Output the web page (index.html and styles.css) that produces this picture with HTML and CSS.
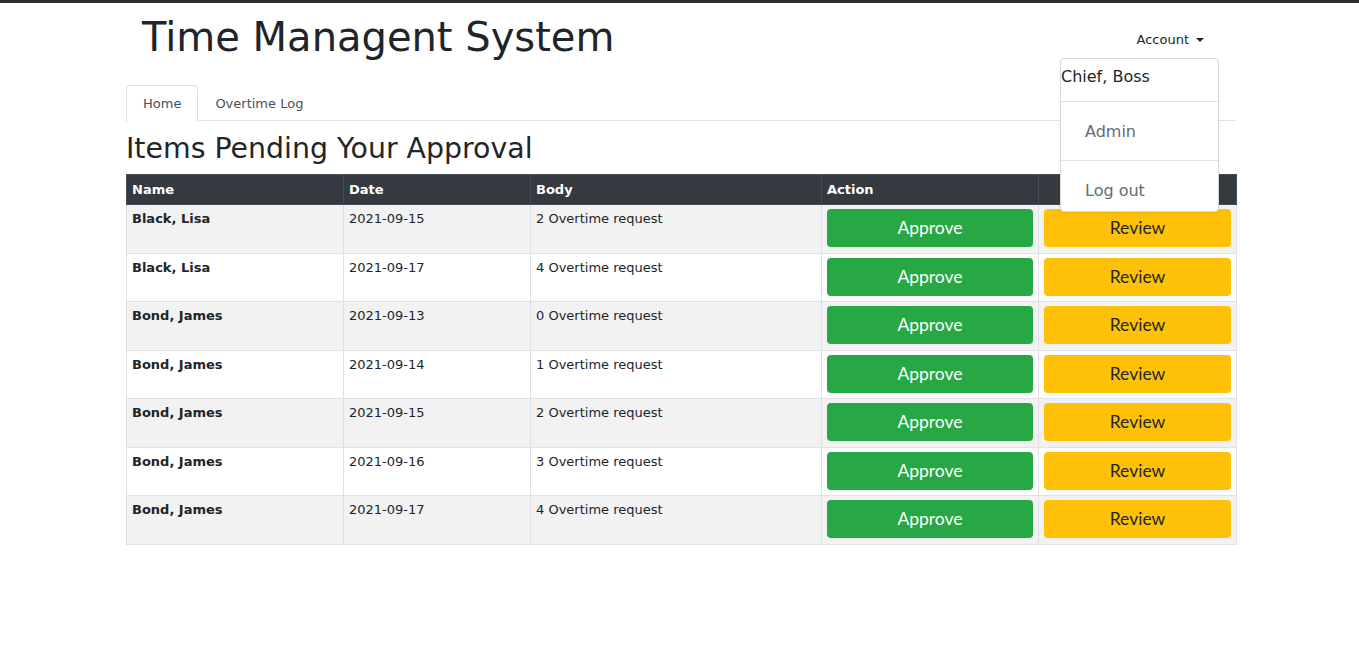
FILE: index.html
```html
<!DOCTYPE html>
<html lang="en">
<head>
<meta charset="utf-8">
<title>Time Managent System</title>
<link rel="stylesheet" href="styles.css">
</head>
<body>
<div class="page">
  <header class="top">
    <h1 class="title">Time Managent System</h1>
    <div class="account">Account <span class="caret"></span></div>
  </header>
  <nav class="tabs">
    <a class="tab active">Home</a>
    <a class="tab">Overtime Log</a>
  </nav>
  <h2 class="heading">Items Pending Your Approval</h2>
  <table class="grid">
    <colgroup>
      <col class="c1"><col class="c2"><col class="c3"><col class="c4"><col class="c5">
    </colgroup>
    <thead>
      <tr><th>Name</th><th>Date</th><th>Body</th><th>Action</th><th></th></tr>
    </thead>
    <tbody>
      <tr><td class="name">Black, Lisa</td><td>2021-09-15</td><td>2 Overtime request</td><td><button class="btn approve">Approve</button></td><td><button class="btn review">Review</button></td></tr>
      <tr><td class="name">Black, Lisa</td><td>2021-09-17</td><td>4 Overtime request</td><td><button class="btn approve">Approve</button></td><td><button class="btn review">Review</button></td></tr>
      <tr><td class="name">Bond, James</td><td>2021-09-13</td><td>0 Overtime request</td><td><button class="btn approve">Approve</button></td><td><button class="btn review">Review</button></td></tr>
      <tr><td class="name">Bond, James</td><td>2021-09-14</td><td>1 Overtime request</td><td><button class="btn approve">Approve</button></td><td><button class="btn review">Review</button></td></tr>
      <tr><td class="name">Bond, James</td><td>2021-09-15</td><td>2 Overtime request</td><td><button class="btn approve">Approve</button></td><td><button class="btn review">Review</button></td></tr>
      <tr><td class="name">Bond, James</td><td>2021-09-16</td><td>3 Overtime request</td><td><button class="btn approve">Approve</button></td><td><button class="btn review">Review</button></td></tr>
      <tr><td class="name">Bond, James</td><td>2021-09-17</td><td>4 Overtime request</td><td><button class="btn approve">Approve</button></td><td><button class="btn review">Review</button></td></tr>
    </tbody>
  </table>
</div>
<div class="menu">
  <div class="menu-user">Chief, Boss</div>
  <div class="menu-item admin">Admin</div>
  <div class="menu-item logout">Log out</div>
</div>
</body>
</html>
```
FILE: styles.css
```css
html, body {
  margin: 0;
  padding: 0;
}
body {
  border-top: 3px solid #2e2e2e;
  font-family: "DejaVu Sans", Verdana, sans-serif;
  font-size: 13px;
  color: #212529;
  background: #fff;
}
.page {
  width: 1110px;
  margin-left: 126px;
}
.top {
  display: flex;
  justify-content: space-between;
  align-items: flex-start;
}
.title {
  margin: 10px 0 0 16px;
  font-size: 40px;
  font-weight: normal;
  line-height: 48px;
  color: #212529;
}
.account {
  margin: 27px 32px 0 0;
  font-size: 13px;
  line-height: 19px;
  display: flex;
  align-items: center;
}
.caret {
  display: inline-block;
  width: 0;
  height: 0;
  margin-left: 7px;
  border-top: 4px solid #212529;
  border-left: 4px solid transparent;
  border-right: 4px solid transparent;
}
.tabs {
  display: flex;
  margin-top: 24px;
  border-bottom: 1px solid #dee2e6;
  height: 35px;
}
.tab {
  display: block;
  padding: 0 16px;
  line-height: 35px;
  font-size: 13px;
  color: #495057;
  border: 1px solid transparent;
  border-bottom: none;
  border-radius: 4px 4px 0 0;
  height: 35px;
}
.tab.active {
  border-color: #dee2e6;
  background: #fff;
  height: 36px;
  margin-bottom: -1px;
}
.heading {
  margin: 11px 0 9px 0;
  font-size: 28.4px;
  font-weight: normal;
  line-height: 33px;
  color: #212529;
}
.grid {
  width: 1110px;
  border-collapse: collapse;
  table-layout: fixed;
}
.c1 { width: 217px; }
.c2 { width: 187px; }
.c3 { width: 291px; }
.c4 { width: 217px; }
.c5 { width: 198px; }
.grid th {
  background: #343a40;
  color: #fff;
  font-weight: bold;
  text-align: left;
  font-size: 13px;
  line-height: 19px;
  padding: 5px 5px 5px 5px;
  border: 1px solid #454d55;
  border-bottom: 1px solid #454d55;
}
.grid td {
  vertical-align: top;
  padding: 4px 5px 5.55px 5px;
  border: 1px solid #dee2e6;
  line-height: 19.5px;
  font-size: 13px;
}
.grid tbody tr:nth-child(odd) td {
  background: #f2f2f2;
}
.grid td.name {
  font-weight: bold;
}
.btn {
  display: block;
  width: 100%;
  height: 38px;
  border: none;
  border-radius: 4px;
  font-family: Lato, "Open Sans", sans-serif;
  font-size: 17.5px;
  line-height: 24px;
  padding: 0;
  cursor: pointer;
}
.approve {
  background: #28a745;
  color: #fff;
}
.review {
  background: #ffc107;
  color: #212529;
}
.menu {
  position: absolute;
  left: 1060px;
  top: 58px;
  width: 157px;
  background: #fff;
  border: 1px solid #d9d9d9;
  border-radius: 4px;
  box-shadow: 0 1px 2px rgba(0,0,0,0.08);
  font-size: 16px;
}
.menu-user {
  height: 42px;
  line-height: 36px;
  padding-left: 0;
  color: #212529;
  border-bottom: 1px solid #e2e2e2;
}
.menu-item {
  padding-left: 24px;
  color: #666b70;
}
.admin {
  height: 58px;
  line-height: 60px;
  border-bottom: 1px solid #e2e2e2;
}
.logout {
  height: 50px;
  line-height: 60px;
  overflow: hidden;
}
```
